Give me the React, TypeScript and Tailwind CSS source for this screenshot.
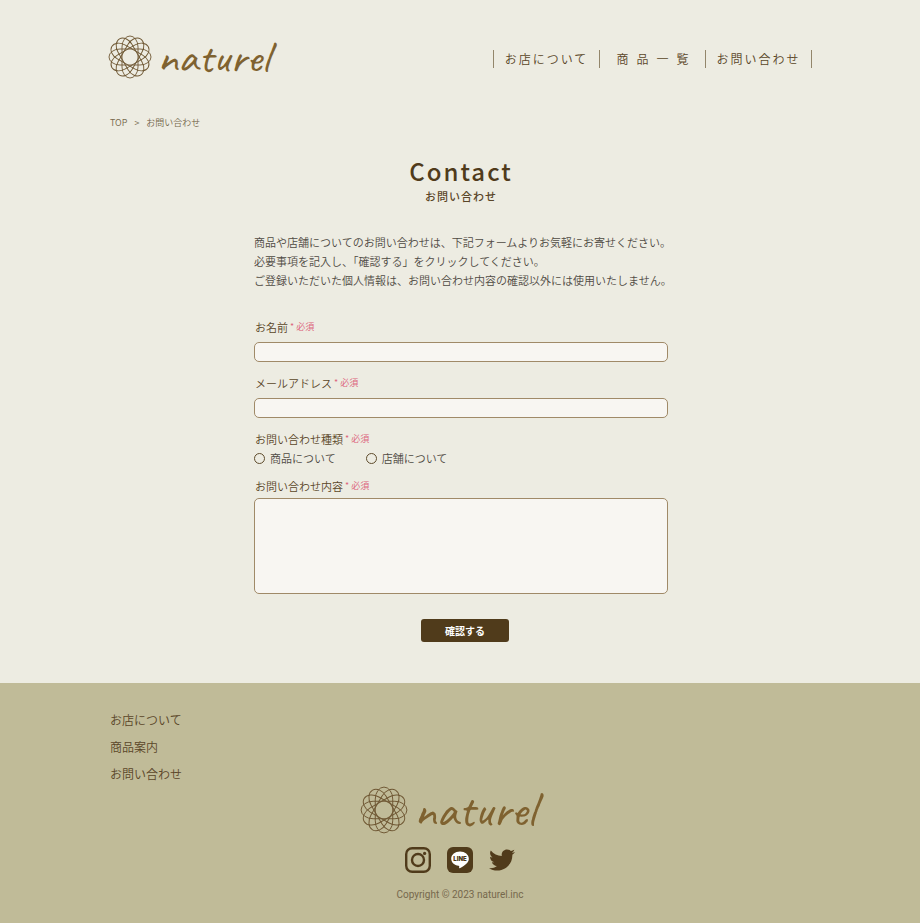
import { FaTwitter } from "react-icons/fa";

function Rosette({ className }: { className: string }) {
  return (
    <svg viewBox="-22 -22 44 44" className={className} fill="none" stroke="currentColor" strokeWidth="0.9" aria-hidden="true">
      {[0, 30, 60, 90, 120, 150].map((a) => (
        <rect key={a} x="-21" y="-8" width="42" height="16" rx="11" ry="8" transform={`rotate(${a})`} />
      ))}
    </svg>
  );
}

function Instagram() {
  return (
    <svg viewBox="0 0 26 26" className="size-[26px]" fill="none" stroke="currentColor" aria-hidden="true">
      <rect x="1.2" y="1.2" width="23.6" height="23.6" rx="6" strokeWidth="2.4" />
      <circle cx="13" cy="13" r="6" strokeWidth="2.4" />
      <circle cx="19.6" cy="6.4" r="1.6" fill="currentColor" stroke="none" />
    </svg>
  );
}

function Line() {
  return (
    <svg viewBox="0 0 26 26" className="size-[26px]" aria-hidden="true">
      <rect width="26" height="26" rx="6" fill="currentColor" />
      <path d="M13 4.600c-4.900 0-8.800 3.200-8.800 7.100 0 3.600 3.100 6.500 7.400 7 .6.1.7.5.6 1.100l-.1 1c0 .4.3.6.7.4 2.300-1.100 5.400-3 7.300-5.200 1.100-1.200 1.700-2.700 1.700-4.300 0-3.900-3.900-7.100-8.800-7.100z" fill="#fff" />
      <text x="13" y="14" textAnchor="middle" className="fill-[#503b1b] font-['Inter',sans-serif] text-[6px] font-black">LINE</text>
    </svg>
  );
}

const nav = ["お店について", "商品一覧", "お問い合わせ"];

function Required() {
  return <span className="text-[9px] text-[#dc6078]">* 必須</span>;
}

const label = "flex items-center gap-[2px] pl-px";
const field = "block w-full rounded-[5px] border border-[#a08a68] bg-[#f8f6f2] px-2 text-xs text-[#503b1b] outline-none";
const radio = "size-[11px] appearance-none rounded-full border border-[#5f4c2c] checked:bg-[#503b1b]";

export default function App() {
  return (
    <div className="min-h-screen bg-[#edece2] font-['Noto_Sans_CJK_JP',sans-serif] font-[350] text-[#5a4628]">
      <header className="flex items-start justify-between px-[108px] pt-[33px]">
        <a href="#top" className="flex h-12 items-center gap-[5px] text-[#7f6230]">
          <Rosette className="size-11 text-[#6f5834]" />
          <span className="font-['Caveat',cursive] text-[46px] font-normal leading-[48px]">naturel</span>
        </a>
        <nav className="mt-[17px] flex h-[18px] border-l border-[#93866b]">
          {nav.map((n, i) => (
            <a key={n} href="#page" className={`flex w-[106px] items-center justify-center border-r border-[#93866b] text-xs ${i === 1 ? "pl-2 tracking-[8px]" : "tracking-[2px]"}`}>{n}</a>
          ))}
        </nav>
      </header>
      <nav aria-label="breadcrumb" className="mt-[34px] flex gap-[7px] px-[110px] text-[9px] leading-4 text-[#76684c]">
        <a href="#top">TOP</a><span>&gt;</span><span>お問い合わせ</span>
      </nav>
      <main className="mx-auto w-[416px] max-w-full pb-[41px] pl-[2px] pt-6">
        <h1 className="text-center text-2xl font-medium leading-8 tracking-[2px] text-[#503b1b]">Contact</h1>
        <p className="text-center text-[11px] font-medium leading-[18px] tracking-[1px]">お問い合わせ</p>
        <p className="mt-7 whitespace-nowrap text-[11px] leading-[19px] text-[#4f4a42]">
          商品や店舗についてのお問い合わせは、下記フォームよりお気軽にお寄せください。<br />
          必要事項を記入し、「確認する」をクリックしてください。<br />
          ご登録いただいた個人情報は、お問い合わせ内容の確認以外には使用いたしません。
        </p>
        <form className="mt-[29px] text-[11px] leading-4">
          <label htmlFor="name" className={label}>お名前<Required /></label>
          <input id="name" className={`${field} mt-[7px] h-5`} />
          <label htmlFor="mail" className={`${label} mt-[13px]`}>メールアドレス<Required /></label>
          <input id="mail" type="email" className={`${field} mt-[7px] h-5`} />
          <fieldset className="mt-[13px]">
            <legend className={label}>お問い合わせ種類<Required /></legend>
            <div className="mt-[3px] flex gap-[30px] text-[#4f4a42]">
              <label className="flex items-center gap-[5px]"><input type="radio" name="kind" className={radio} />商品について</label>
              <label className="flex items-center gap-[5px]"><input type="radio" name="kind" className={radio} />店舗について</label>
            </div>
          </fieldset>
          <label htmlFor="body" className={`${label} mt-3`}>お問い合わせ内容<Required /></label>
          <textarea id="body" className={`${field} mt-1 h-24 resize-none`} />
          <div className="mt-[25px] flex justify-center pl-2">
            <button type="button" className="h-[23px] w-[88px] rounded-[3px] bg-[#503b1b] text-[10px] font-bold text-white">確認する</button>
          </div>
        </form>
      </main>
      <footer className="bg-[#c0bb98] px-[110px] pb-5 pt-[25px]">
        <ul className="space-y-[3px] text-xs leading-6">
          {nav.map((n, i) => <li key={n}><a href="#page">{i === 1 ? "商品案内" : n}</a></li>)}
        </ul>
        <div className="flex flex-col items-center text-[#503b1b]">
          <a href="#top" className="flex h-12 items-center gap-[5px] pr-6 text-[#7f6230]">
            <Rosette className="size-12 text-[#6f5834]" />
            <span className="font-['Caveat',cursive] text-[50px] font-normal leading-[48px]">naturel</span>
          </a>
          <div className="mt-[13px] flex gap-4">
            <a href="#instagram" aria-label="Instagram"><Instagram /></a>
            <a href="#line" aria-label="LINE"><Line /></a>
            <a href="#twitter" aria-label="Twitter"><FaTwitter className="size-[26px]" /></a>
          </div>
          <small className="mt-[14px] font-['Roboto',sans-serif] text-[10px] font-normal leading-4 text-[#76684c]">Copyright © 2023 naturel.inc</small>
        </div>
      </footer>
    </div>
  );
}
